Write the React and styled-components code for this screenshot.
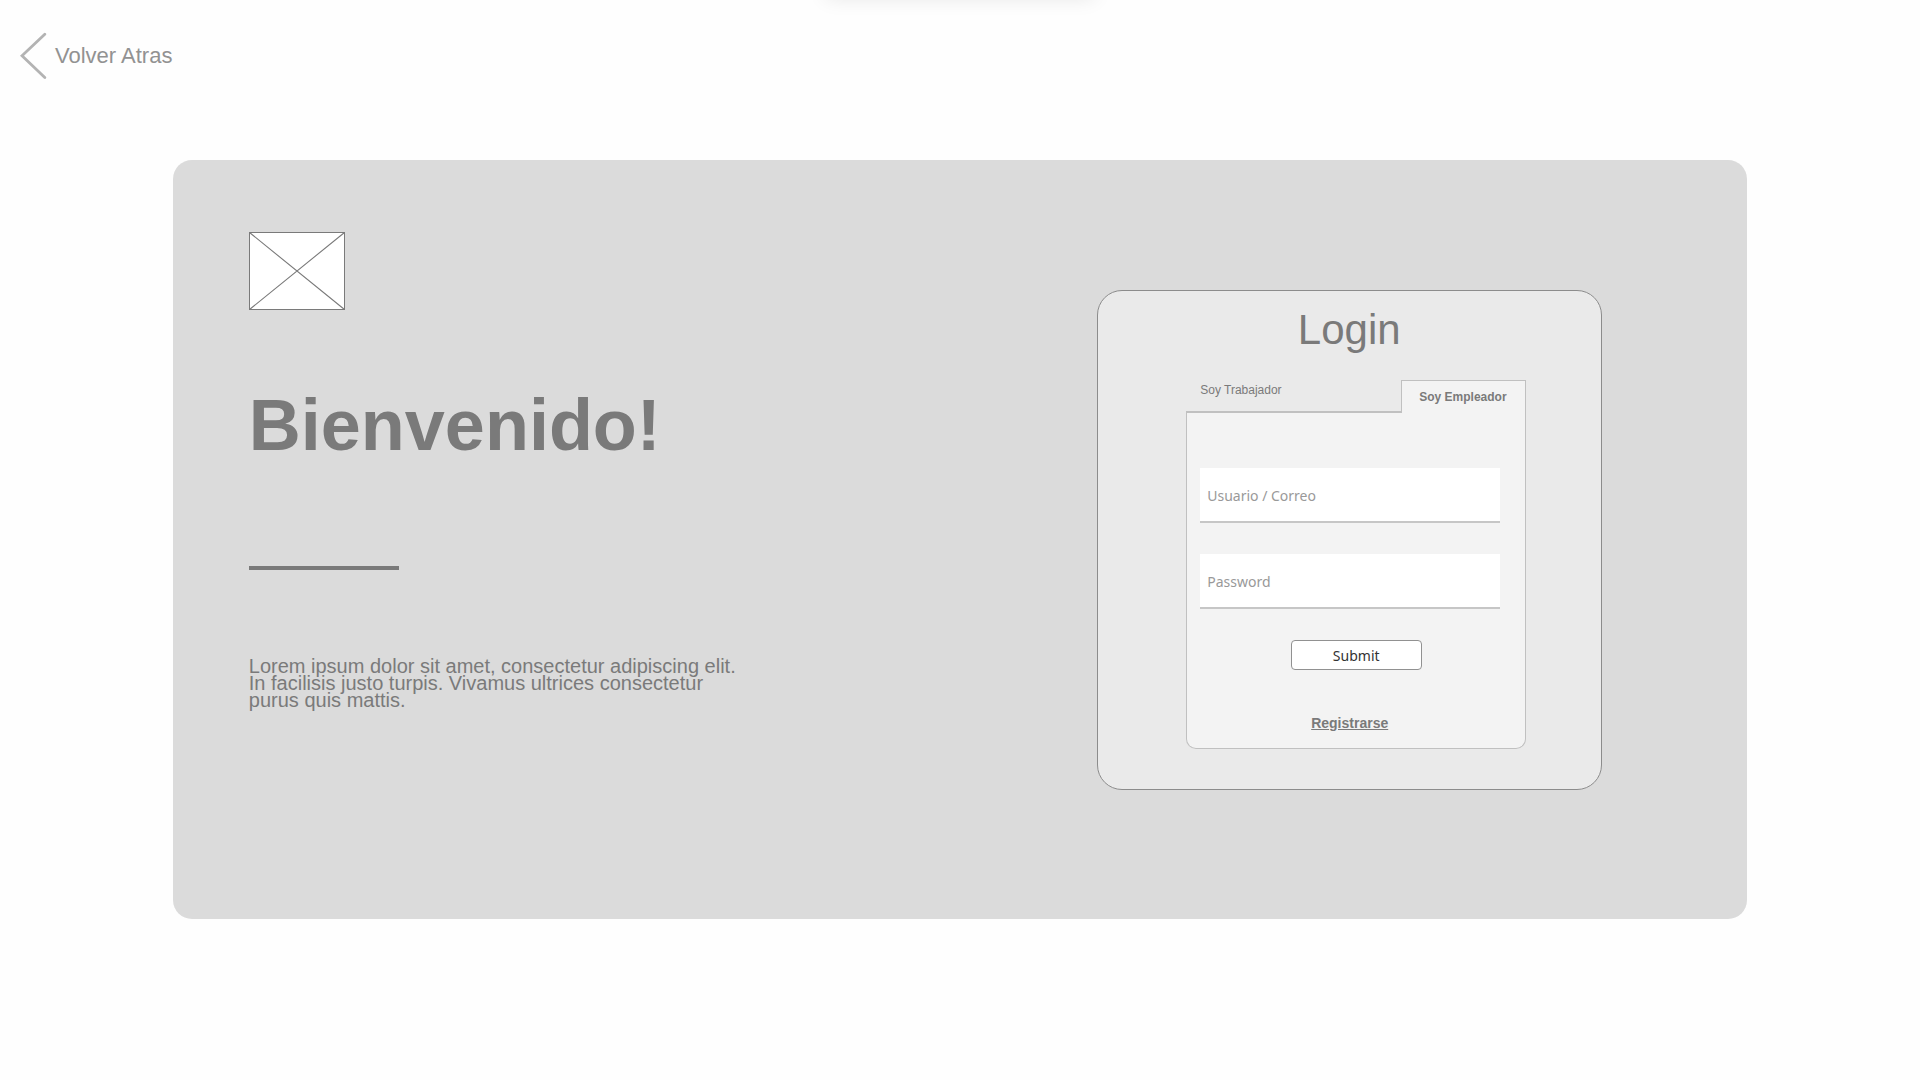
import React, { useState } from "react";
import styled, { createGlobalStyle } from "styled-components";

const GlobalStyle = createGlobalStyle`
  *, *::before, *::after { box-sizing: border-box; }
  body {
    margin: 0;
    background: #fefefe;
    color: #7a7a7a;
    font-family: "Liberation Sans", Arial, sans-serif;
  }
  h1, h2, p { margin: 0; }
`;

const Page = styled.div`
  position: relative;
  overflow: hidden;
  min-height: 100vh;
`;

const TopShadow = styled.div`
  position: absolute;
  top: -24px;
  left: 50%;
  width: 268px;
  height: 20px;
  margin-left: -134px;
  box-shadow: 0 2px 20px rgba(0, 0, 0, 0.1);
`;

const Header = styled.header`
  display: flex;
  height: 160px;
  padding: 32px 20px;
`;

const BackLink = styled.a`
  display: flex;
  align-items: center;
  align-self: flex-start;
  gap: 8px;
  color: #929292;
  font-size: 22px;
  line-height: 24px;
  text-decoration: none;
`;

const Hero = styled.main`
  display: flex;
  justify-content: space-between;
  align-items: flex-start;
  gap: 40px;
  margin: 0 9% 40px;
  padding: 72px 145px 129px 76px;
  border-radius: 19px;
  background: #dbdbdb;
`;

const Intro = styled.section`
  display: flex;
  flex-direction: column;
  align-items: flex-start;
  max-width: 500px;
`;

const Title = styled.h1`
  margin-top: 74px;
  font-size: 72px;
  line-height: 82px;
`;

const Rule = styled.hr`
  width: 150px;
  height: 4px;
  margin: 100px 0 88px;
  border: 0;
  background: #7a7a7a;
`;

const Lead = styled.p`
  font-size: 20px;
  line-height: 17px;
`;

const Card = styled.section`
  flex: 0 1 505px;
  margin-top: 58px;
  padding: 15px 75px 40px 88px;
  border: 1px solid #8c8c8c;
  border-radius: 25px;
  background: #eaeaea;
`;

const CardTitle = styled.h2`
  margin: 0 0 26px;
  padding-right: 14px;
  font-size: 42px;
  font-weight: 400;
  line-height: 48px;
  text-align: center;
`;

const Tabs = styled.div`
  display: flex;
  height: 33px;
`;

const Tab = styled.button`
  flex: ${({ $active }) => ($active ? "0 0 125px" : "1")};
  display: flex;
  align-items: flex-start;
  justify-content: flex-start;
  padding: ${({ $active }) => ($active ? "9px 17px 0" : "3px 14px 0")};
  border: solid #c0c0c0;
  border-width: ${({ $active }) => ($active ? "1px 1px 0" : "0 0 2px")};
  background: ${({ $active }) => ($active ? "#f3f3f3" : "transparent")};
  color: inherit;
  font-family: inherit;
  font-size: 12px;
  font-weight: ${({ $active }) => ($active ? 700 : 400)};
  line-height: 14px;
  white-space: nowrap;
  cursor: pointer;
`;

const Panel = styled.form`
  display: flex;
  flex-direction: column;
  padding: 55px 0 17px;
  border: solid #c0c0c0;
  border-width: 0 1px 1px;
  border-radius: 0 0 10px 10px;
  background: #f3f3f3;
`;

const Fields = styled.div`
  display: flex;
  flex-direction: column;
  gap: 31px;
  padding: 0 25px 0 13px;
`;

const Field = styled.input`
  width: 100%;
  height: 55px;
  padding: 2px 7px 0;
  border: 0;
  border-bottom: 2px solid #c6c6c6;
  border-radius: 0;
  background: #fff;
  color: #333;
  font-family: "Noto Sans", sans-serif;
  font-size: 14px;

  &::placeholder {
    color: #999;
    opacity: 1;
  }
`;

const Submit = styled.button`
  align-self: center;
  width: 131px;
  height: 30px;
  margin: 31px 0 45px;
  padding: 0;
  border: 1px solid #919191;
  border-radius: 4px;
  background: #fff;
  color: #333;
  font-family: "Noto Sans", sans-serif;
  font-size: 14px;
  cursor: pointer;
`;

const RegisterRow = styled.div`
  padding: 0 26px 0 13px;
  text-align: center;
  line-height: 16px;
`;

const RegisterLink = styled.a`
  color: inherit;
  font-size: 14px;
  font-weight: 700;
`;

const ChevronLeft = () => (
  <svg width="27" height="48" viewBox="0 0 27 48" fill="none" aria-hidden="true">
    <path d="M24.8 2.2 2 23.7 24.8 45.6" stroke="#b3b3b3" strokeWidth="2.8" strokeLinecap="round" />
  </svg>
);

const LogoPlaceholder = () => (
  <svg width="96" height="78" viewBox="0 0 96 78" fill="none" stroke="#7a7a7a" aria-hidden="true">
    <rect x="0.5" y="0.5" width="95" height="77" fill="#fff" />
    <path d="M0.5 0.5 95.5 77.5M95.5 0.5 0.5 77.5" strokeWidth="1.1" />
  </svg>
);

const ROLES = ["Soy Trabajador", "Soy Empleador"];

export default function App() {
  const [role, setRole] = useState("Soy Empleador");

  return (
    <Page>
      <GlobalStyle />
      <TopShadow />
      <Header>
        <BackLink href="#">
          <ChevronLeft />
          Volver Atras
        </BackLink>
      </Header>
      <Hero>
        <Intro>
          <LogoPlaceholder />
          <Title>Bienvenido!</Title>
          <Rule />
          <Lead>
            Lorem ipsum dolor sit amet, consectetur adipiscing elit. In facilisis justo turpis.
            Vivamus ultrices consectetur purus quis mattis.
          </Lead>
        </Intro>
        <Card>
          <CardTitle>Login</CardTitle>
          <Tabs role="tablist">
            {ROLES.map((name) => (
              <Tab
                key={name}
                type="button"
                role="tab"
                aria-selected={role === name}
                $active={role === name}
                onClick={() => setRole(name)}
              >
                {name}
              </Tab>
            ))}
          </Tabs>
          <Panel onSubmit={(event) => event.preventDefault()}>
            <Fields>
              <Field type="text" placeholder="Usuario / Correo" aria-label="Usuario / Correo" />
              <Field type="password" placeholder="Password" aria-label="Password" />
            </Fields>
            <Submit type="submit">Submit</Submit>
            <RegisterRow>
              <RegisterLink href="#">Registrarse</RegisterLink>
            </RegisterRow>
          </Panel>
        </Card>
      </Hero>
    </Page>
  );
}
